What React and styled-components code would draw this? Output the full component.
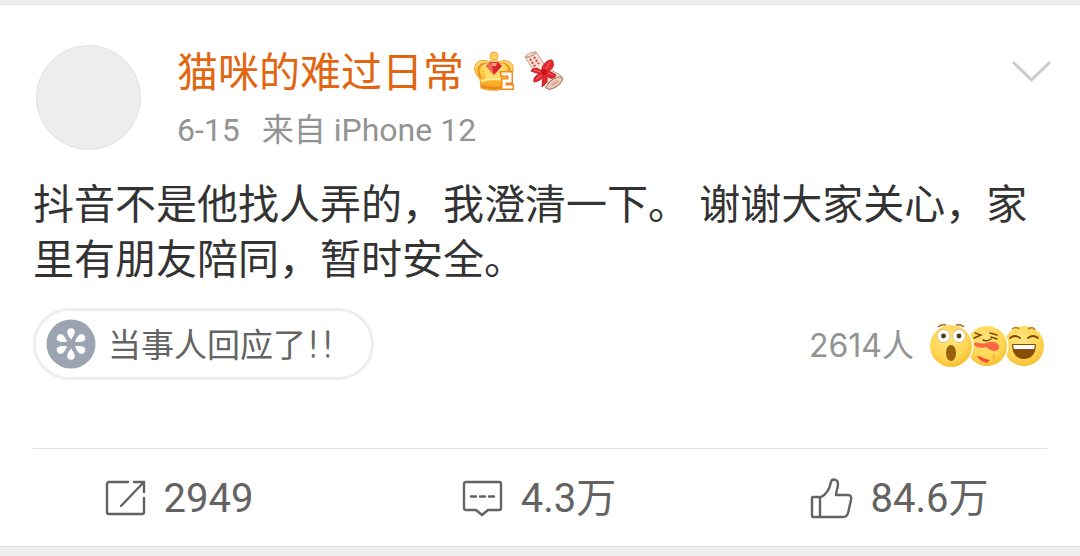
import React from "react";
import styled, { createGlobalStyle } from "styled-components";

const GlobalStyle = createGlobalStyle`
  * { box-sizing: border-box; }
  body {
    margin: 0;
    background: #ededed;
    font-family: Roboto, "Noto Sans CJK SC", sans-serif;
  }
  button { border: 0; padding: 0; background: none; font: inherit; color: inherit; cursor: pointer; }
  svg { display: block; flex: none; }
`;

const Page = styled.main`
  padding: 4px 0 10px;
`;

const Card = styled.article`
  background: #fff;
  border-top: 1px solid #e2e2e2;
  border-bottom: 1px solid #e2e2e2;
`;

const Content = styled.div`
  padding: 40px 33px 0;
`;

const Header = styled.header`
  display: flex;
  align-items: flex-start;
  padding-left: 3px;
`;

const Avatar = styled.div`
  flex: none;
  width: 105px;
  height: 105px;
  margin-right: 36px;
  border: 1px solid #e0e0e0;
  border-radius: 50%;
  background: #ededed;
`;

const Author = styled.div`
  flex: 1;
  min-width: 0;
`;

const NameRow = styled.div`
  display: flex;
  align-items: center;
  gap: 10px;
  height: 52px;
`;

const Name = styled.a`
  color: #e2650f;
  font-size: 41px;
  line-height: 52px;
  padding-top: 3px;
  text-decoration: none;
`;

const Meta = styled.div`
  display: flex;
  gap: 22px;
  margin-top: 14px;
  color: #939393;
  font-size: 32px;
  line-height: 38px;
`;

const MenuButton = styled.button`
  margin: 14px -5px 0 0;
`;

const PostText = styled.p`
  margin: 28px 0 20px;
  color: #333;
  font-size: 41px;
  line-height: 55px;
`;

const Reactions = styled.div`
  display: flex;
  align-items: center;
  justify-content: space-between;
`;

const Topic = styled.button`
  display: flex;
  align-items: center;
  gap: 12px;
  height: 72px;
  padding: 0 36px 0 10px;
  border: 3px solid #eee;
  border-radius: 36px;
  color: #636363;
  font-size: 33px;
  line-height: 36px;
`;

const TopicLabel = styled.span`
  padding-top: 3px;
`;

const Marks = styled.span`
  font-family: "DejaVu Sans", sans-serif;
  font-size: 36px;
  font-weight: 200;
  line-height: 36px;
  -webkit-text-stroke: 1px currentColor;
`;

const People = styled.button`
  display: flex;
  align-items: center;
  gap: 16px;
  color: #939393;
  font-family: Inter, "Noto Sans CJK SC", sans-serif;
  font-size: 32px;
  line-height: 40px;
`;

const PeopleCount = styled.span`
  padding-top: 4px;
`;

const Actions = styled.footer`
  display: flex;
  height: 97px;
`;

const Divider = styled.hr`
  height: 1px;
  margin: 68px 33px 0;
  border: 0;
  background: #e2e2e2;
`;

const Action = styled.button`
  flex: 1;
  display: flex;
  align-items: center;
  justify-content: center;
  gap: 18px;
  padding-right: 2px;
  color: #636363;
  font-size: 40px;
  line-height: 48px;
`;

const ActionCount = styled.span`
  padding-top: 3px;
`;

const CrownBadge = () => (
  <svg width="40" height="40" viewBox="0 0 40 40" role="img" aria-label="2">
    <defs>
      <linearGradient id="gold" x1="0" y1="0" x2="0" y2="1">
        <stop offset="0" stopColor="#ffe07a" />
        <stop offset="0.55" stopColor="#ffc53a" />
        <stop offset="1" stopColor="#f79a1a" />
      </linearGradient>
    </defs>
    <path d="M7 37 L6 28 C1 23 0 18 1 15 C3 9 10 8 15 11 L20 7 L25 11 C31 8 38 10 39 16 C40 21 37 25 34 28 L33 37 C26 40 14 40 7 37Z" fill="url(#gold)" stroke="#f0a02c" />
    <path d="M7 27 C3 21 4 15 9 13 C15 11 18 16 18 28 M33 27 C37 21 36 15 31 13 C25 11 23 16 22 28" fill="none" stroke="#e99123" strokeWidth="2" />
    <path d="M10 13 C15 11 19 14 20 22 C21 14 26 11 31 13 L27 29 H12Z" fill="#ffdd68" />
    <path d="M7 30 Q20 26 34 30" fill="none" stroke="#ffed9c" strokeWidth="2" />
    <path d="M7 35 Q20 39 34 35" fill="none" stroke="#e88617" strokeWidth="2" />
    <circle cx="20" cy="5" r="4" fill="#ffd16b" stroke="#f3a43a" />
    <path d="M16 11 H24 L28 15 L20 24 L12 15Z" fill="#d9272d" />
    <path d="M16 11 L18 15 L20 24 L12 15Z" fill="#f26a55" />
    <path d="M17 12 H23 L22 15 H18Z" fill="#ff9b82" />
    <path d="M29 23 H36 V30 H30 V36 H37" fill="none" stroke="#f08a1c" strokeWidth="6" strokeLinecap="square" />
    <path d="M29 23 H36 V30 H30 V36 H37" fill="none" stroke="#fff" strokeWidth="3" strokeLinecap="square" />
  </svg>
);

const ScrollBadge = () => (
  <svg width="40" height="40" viewBox="0 0 40 40" aria-hidden="true">
    <path d="M1 6 Q5 1 12 1 L22 16 L36 24 Q40 27 38 30 Q33 37 25 38 Q21 38 20 34 L15 22 L10 20Z" fill="#fbe4d6" stroke="#c49a87" />
    <path d="M1 6 Q7 7 12 1" fill="none" stroke="#c79c8b" strokeWidth="1.5" />
    <ellipse cx="30.500" cy="32" rx="9" ry="4" transform="rotate(-35 30.500 32)" fill="#f0cdbb" stroke="#a77b6c" />
    <ellipse cx="31" cy="32" rx="4.500" ry="1.500" transform="rotate(-35 31 32)" fill="#d9aa98" />
    <path d="M6 8 L12 17 M10 6 L15 13" stroke="#d05050" strokeWidth="2.4" strokeDasharray="2 1.500" />
    <path d="M17 20 C14 16 8 17 7 20 C10 21 12 22 16 23 C12 24 9 27 10 31 C14 31 17 28 19 26 L18 36 L23 31 L23 25 C27 29 31 27 32 24 C29 22 27 21 24 20 C29 18 31 14 28 9 C23 9 19 13 18 18Z" fill="#e8262d" stroke="#c51a26" strokeLinejoin="round" />
    <path d="M17 21 L10 19 M18 24 L12 28 M22 18 L26 11 M24 22 L29 24" stroke="#ff7169" />
    <circle cx="20" cy="21" r="3" fill="#c9141e" />
  </svg>
);

const Chevron = () => (
  <svg width="40" height="24" viewBox="0 0 40 24" fill="none" stroke="#ccc" strokeWidth="3" aria-hidden="true">
    <path d="M1 3 L19.500 21 L38 3" />
  </svg>
);

const FlowerIcon = () => (
  <svg width="50" height="50" viewBox="0 0 50 50" aria-hidden="true">
    <circle cx="25" cy="25" r="24.500" fill="#9ca3b1" />
    {[0, 60, 120, 180, 240, 300].map((angle) => (
      <path key={angle} d="M25 20.500 C23 18 21.200 15 21.200 13 A3.800 3.800 0 0 1 28.800 13 C28.800 15 27 18 25 20.500Z" fill="#fff" transform={`rotate(${angle} 25 25)`} />
    ))}
  </svg>
);

const FaceTrio = () => (
  <svg width="117" height="46" viewBox="0 0 117 46" aria-hidden="true">
    <defs>
      <radialGradient id="face" cx="0.45" cy="0.35" r="0.7">
        <stop offset="0" stopColor="#ffe57c" />
        <stop offset="0.65" stopColor="#ffd552" />
        <stop offset="1" stopColor="#f6b92c" />
      </radialGradient>
    </defs>
    <g>
      <circle cx="94" cy="25" r="20" fill="url(#face)" />
      <path d="M82 8 Q86 5 89 8 M98 8 Q103 5 105 9" fill="none" stroke="#b87925" strokeWidth="1.500" />
      <path d="M80 17 Q85 13 90 17 M98 17 Q103 13 108 17" fill="none" stroke="#7c4708" strokeWidth="1.800" strokeLinecap="round" />
      <path d="M82 23 H106 C106 33 101 38 94 38 C87 38 82 33 82 23Z" fill="#8a4e08" />
      <path d="M83 24 H105 L104 28 H84Z" fill="#fff" />
    </g>
    <g>
      <circle cx="57" cy="25" r="21.500" fill="#fff" />
      <circle cx="57" cy="25" r="20" fill="url(#face)" />
      <path d="M45 12 L51 14 L44 17 M53 19 Q57 21 61 18 M60 12 L67 14 M61 16 L67 18" fill="none" stroke="#7c4708" strokeWidth="1.500" strokeLinecap="round" />
      <path d="M44 22 C48 20 51 24 56 22 C63 19 70 22 69 27 C68 32 60 30 56 26 C51 28 46 26 44 24Z" fill="#fc6845" />
      <path d="M47 35 C51 35 54 38 60 39 L57 42 Q49 40 47 35Z" fill="#f64d35" />
      <path d="M63 34 Q65 35 63 38" fill="none" stroke="#eeb348" strokeWidth="2" />
    </g>
    <g>
      <circle cx="21" cy="25" r="22.500" fill="#fff" />
      <circle cx="21" cy="25" r="21" fill="url(#face)" />
      <path d="M8 6 Q11 3 16 4 M26 4 Q31 3 34 6" fill="none" stroke="#a96c21" strokeWidth="1.500" />
      <circle cx="13.500" cy="15" r="6.500" fill="#fff" stroke="#e4c27a" />
      <circle cx="29" cy="15" r="6.500" fill="#fff" stroke="#e4c27a" />
      <circle cx="13.500" cy="15" r="2.400" fill="#523813" />
      <circle cx="29" cy="15" r="2.400" fill="#523813" />
      <ellipse cx="21" cy="32" rx="5" ry="8" fill="#99600a" />
    </g>
  </svg>
);

const ShareIcon = () => (
  <svg width="41" height="36" viewBox="0 0 41 36" fill="none" stroke="#636363" strokeWidth="2.400" aria-hidden="true">
    <path d="M23 2 H4 Q2 2 2 4 V32 Q2 34 4 34 H37 Q39 34 39 32 V18" strokeLinecap="round" />
    <path d="M29 2 H39 V12 M16 26 L38 3" strokeLinecap="round" />
  </svg>
);

const CommentIcon = () => (
  <svg width="41" height="38" viewBox="0 0 41 38" fill="none" stroke="#636363" strokeWidth="2.400" strokeLinejoin="round" aria-hidden="true">
    <path d="M4 3 H37 Q39 3 39 5 V29 Q39 31 37 31 H26 L20 36 L14 31 H4 Q2 31 2 29 V5 Q2 3 4 3Z" />
    <path d="M9 17.500 H14 M18 17.500 H23 M27 17.500 H32" strokeLinecap="round" />
  </svg>
);

const LikeIcon = () => (
  <svg width="43" height="42" viewBox="0 0 43 42" fill="none" stroke="#636363" strokeWidth="2.400" strokeLinejoin="round" aria-hidden="true">
    <path d="M3 20 H11 C17 17 20 10 21 5 C22 1 28 2 28 7 C28 11 26 14 26 18 H38 Q42 18 41 23 L38 36 Q37 40 33 40 H3 Q2 40 2 38 V22 Q2 20 3 20Z" />
    <path d="M10 20 V40" />
  </svg>
);

export default function App() {
  return (
    <>
      <GlobalStyle />
      <Page>
        <Card>
          <Content>
            <Header>
              <Avatar />
              <Author>
                <NameRow>
                  <Name href="#author">猫咪的难过日常</Name>
                  <CrownBadge />
                  <ScrollBadge />
                </NameRow>
                <Meta>
                  <time>6-15</time>
                  <span>来自 iPhone 12</span>
                </Meta>
              </Author>
              <MenuButton type="button" aria-label="更多">
                <Chevron />
              </MenuButton>
            </Header>
            <PostText>抖音不是他找人弄的，我澄清一下。 谢谢大家关心，家里有朋友陪同，暂时安全。</PostText>
            <Reactions>
              <Topic type="button">
                <FlowerIcon />
                <TopicLabel>当事人回应了<Marks>!!</Marks></TopicLabel>
              </Topic>
              <People type="button">
                <PeopleCount>2614人</PeopleCount>
                <FaceTrio />
              </People>
            </Reactions>
          </Content>
          <Divider />
          <Actions>
            <Action type="button">
              <ShareIcon />
              <ActionCount>2949</ActionCount>
            </Action>
            <Action type="button">
              <CommentIcon />
              <ActionCount>4.3万</ActionCount>
            </Action>
            <Action type="button">
              <LikeIcon />
              <ActionCount>84.6万</ActionCount>
            </Action>
          </Actions>
        </Card>
      </Page>
    </>
  );
}
